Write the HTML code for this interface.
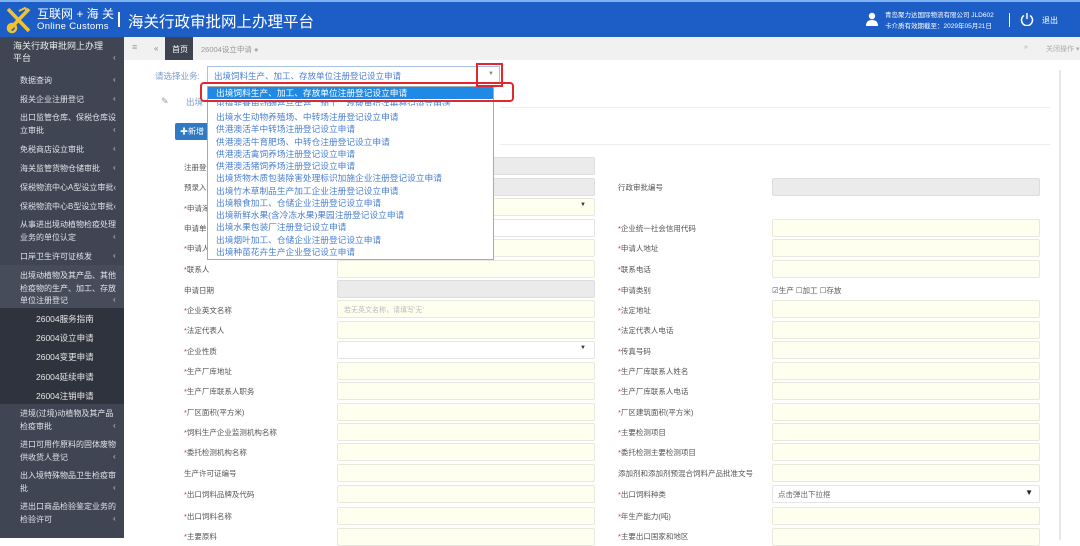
<!DOCTYPE html>
<html><head><meta charset="utf-8"><style>
*{margin:0;padding:0;box-sizing:border-box}
body{width:1080px;height:538px;overflow:hidden;background:#fff;font-family:"Liberation Sans","Noto Sans CJK SC",sans-serif;position:relative;color:#555}
.a{position:absolute;white-space:nowrap}
#hd{left:0;top:0;width:1080px;height:37px;background:#1d5ec6;border-top:2px solid #7fb0f0}
#sb{left:0;top:37px;width:124px;height:501px;background:#3f4552}
.si{position:absolute;left:20px;font-size:8px;color:#dfe3ea;line-height:12.5px;width:98px}
.ar{position:absolute;left:113px;font-size:8px;color:#ccc}
.sub{position:absolute;left:36px;font-size:8.5px;color:#e6e6e6}
.lb{position:absolute;font-size:7.5px;color:#555;white-space:nowrap}
.in{position:absolute;height:18px;background:#fffff0;border:1px solid #e8e8dc;border-radius:2px}
.gr{background:#ebebeb;border-color:#ddd}
.wh{background:#fff;border-color:#e4e4e4}
.st{color:#c33}
#dd{left:207px;top:86px;width:287px;height:174px;background:#fff;border:1px solid #aaa;z-index:10}
.dl{position:absolute;left:8px;font-size:8.7px;line-height:12px;color:#4a7fd0;white-space:nowrap}
</style></head><body>
<div id="hd" class="a">
 <svg class="a" style="left:5px;top:3px" width="28" height="30" viewBox="0 0 28 30"><path d="M3 4 L24 26 M24 4 L3 26" stroke="#f3c22c" stroke-width="3.5" fill="none"/><circle cx="7" cy="23" r="4" fill="none" stroke="#f3c22c" stroke-width="2.5"/><path d="M14 6 l6 -3 l3 4" stroke="#f3c22c" stroke-width="2" fill="none"/></svg>
 <div class="a" style="left:37px;top:3px;font-size:12px;color:#fff">互联网 + 海 关</div>
 <div class="a" style="left:37px;top:19px;font-size:9.5px;color:#fff;letter-spacing:.3px">Online Customs</div>
 <div class="a" style="left:118px;top:10px;width:2px;height:15px;background:#fff"></div>
 <div class="a" style="left:128px;top:8px;font-size:15.5px;color:#fff">海关行政审批网上办理平台</div>
 <svg class="a" style="left:866px;top:10px" width="12" height="14" viewBox="0 0 12 14"><circle cx="6" cy="4" r="3.2" fill="#fff"/><path d="M0 14 Q0 8 6 8 Q12 8 12 14Z" fill="#fff"/></svg>
 <div class="a" style="left:885px;top:8px;font-size:6.5px;color:#fff;line-height:11px">青岛聚力达国际物流有限公司 JLD602<br>卡介质有效期截至：2029年05月21日</div>
 <div class="a" style="left:1009px;top:11px;width:1px;height:14px;background:#fff"></div>
 <svg class="a" style="left:1020px;top:10px" width="14" height="14" viewBox="0 0 14 14"><path d="M4 3.5 A5.5 5.5 0 1 0 10 3.5" stroke="#fff" stroke-width="1.5" fill="none"/><path d="M7 1 V7" stroke="#fff" stroke-width="1.5"/></svg>
 <div class="a" style="left:1042px;top:13px;font-size:8px;color:#fff">退出</div>
</div>
<div id="sb" class="a">
 <div class="si" style="left:13px;top:3px;font-size:9px;line-height:12px;color:#eee">海关行政审批网上办理<br>平台</div><div class="ar" style="top:16px">‹</div>
 <div class="si" style="top:38px">数据查询</div><div class="ar" style="top:38px">‹</div>
 <div class="si" style="top:57px">报关企业注册登记</div><div class="ar" style="top:57px">‹</div>
 <div class="si" style="top:75px">出口监管仓库、保税仓库设<br>立审批</div><div class="ar" style="top:88px">‹</div>
 <div class="si" style="top:107px">免税商店设立审批</div><div class="ar" style="top:107px">‹</div>
 <div class="si" style="top:126px">海关监管货物仓储审批</div><div class="ar" style="top:126px">‹</div>
 <div class="si" style="top:145px">保税物流中心A型设立审批‹</div>
 <div class="si" style="top:164px">保税物流中心B型设立审批‹</div>
 <div class="si" style="top:182px">从事进出境动植物检疫处理<br>业务的单位认定</div><div class="ar" style="top:195px">‹</div>
 <div class="si" style="top:214px">口岸卫生许可证核发</div><div class="ar" style="top:214px">‹</div>
 <div class="a" style="left:0;top:228px;width:124px;height:43px;background:#464c5a"></div>
 <div class="si" style="top:233px">出境动植物及其产品、其他<br>检疫物的生产、加工、存放<br>单位注册登记</div><div class="ar" style="top:258px">‹</div>
 <div class="a" style="left:0;top:271px;width:124px;height:96px;background:#2f333e"></div>
 <div class="sub" style="top:276px">26004服务指南</div>
 <div class="sub" style="top:295px">26004设立申请</div>
 <div class="sub" style="top:314px">26004变更申请</div>
 <div class="sub" style="top:334px">26004延续申请</div>
 <div class="sub" style="top:353px">26004注销申请</div>
 <div class="si" style="top:371px">进境(过境)动植物及其产品<br>检疫审批</div><div class="ar" style="top:384px">‹</div>
 <div class="si" style="top:402px">进口可用作原料的固体废物<br>供收货人登记</div><div class="ar" style="top:415px">‹</div>
 <div class="si" style="top:433px">出入境特殊物品卫生检疫审<br>批</div><div class="ar" style="top:446px">‹</div>
 <div class="si" style="top:464px">进出口商品检验鉴定业务的<br>检验许可</div><div class="ar" style="top:477px">‹</div>
</div>
<div class="a" style="left:124px;top:37px;width:956px;height:23px;background:#f1f1f1"></div>
<div class="a" style="left:132px;top:42px;font-size:9px;color:#999">≡</div>
<div class="a" style="left:154px;top:44px;font-size:8px;color:#888">«</div>
<div class="a" style="left:165px;top:37px;width:28px;height:23px;background:#3d4350;color:#fff;font-size:8px;padding:7px 0 0 7px">首页</div>
<div class="a" style="left:201px;top:44px;font-size:7.5px;color:#999">26004设立申请 <span style="color:#aaa">●</span></div>
<div class="a" style="left:1024px;top:44px;font-size:7px;color:#aaa">»</div>
<div class="a" style="left:1046px;top:44px;font-size:7px;color:#aaa">关闭操作 ▾</div>
<div class="a" style="left:1059px;top:70px;width:2px;height:470px;background:#e6e6e6"></div>

<div class="lb" style="left:155px;top:70px;color:#7a9ccc;font-size:8.5px">请选择业务:</div>
<div class="a" style="left:207px;top:66px;width:293px;height:18px;border:1px solid #a9c1e6;background:#fff"></div>
<div class="a" style="left:214px;top:70px;font-size:8.5px;color:#4a7fd0">出境饲料生产、加工、存放单位注册登记设立申请</div>
<div class="a" style="left:488px;top:71px;font-size:6px;color:#888">▼</div>
<div class="a" style="left:476px;top:63px;width:27px;height:24px;border:2.5px solid #e0282e;z-index:11"></div>
<div class="a" style="left:161px;top:96px;font-size:9px;color:#999">✎</div>
<div class="a" style="left:186px;top:96px;font-size:8.5px;color:#7a9ccc">出境</div>
<div class="a" style="left:500px;top:107px;width:550px;height:1px;background:#eee"></div>
<div class="a" style="left:500px;top:144px;width:550px;height:1px;background:#eee"></div>
<div class="a" style="left:175px;top:123px;width:36px;height:17px;background:#2f7ac3;border-radius:2px;color:#fff;font-size:8px;padding:3px 0 0 5px">✚新增</div>

<div id="dd" class="a">
 <div class="a" style="left:0;top:0;width:285px;height:12px;background:#1e8ae6"></div>
 <div class="dl" style="top:0px;color:#fff">出境饲料生产、加工、存放单位注册登记设立申请</div>
 <div class="dl" style="top:12px;height:7px;overflow:hidden">出境非食用动物产品生产、加工、存放单位注册登记设立申请</div>
 <div class="dl" style="top:24px">出境水生动物养殖场、中转场注册登记设立申请</div>
 <div class="dl" style="top:36px">供港澳活羊中转场注册登记设立申请</div>
 <div class="dl" style="top:49px">供港澳活牛育肥场、中转仓注册登记设立申请</div>
 <div class="dl" style="top:61px">供港澳活禽饲养场注册登记设立申请</div>
 <div class="dl" style="top:73px">供港澳活猪饲养场注册登记设立申请</div>
 <div class="dl" style="top:85px">出境货物木质包装除害处理标识加施企业注册登记设立申请</div>
 <div class="dl" style="top:98px">出境竹木草制品生产加工企业注册登记设立申请</div>
 <div class="dl" style="top:110px">出境粮食加工、仓储企业注册登记设立申请</div>
 <div class="dl" style="top:122px">出境新鲜水果(含冷冻水果)果园注册登记设立申请</div>
 <div class="dl" style="top:134px">出境水果包装厂注册登记设立申请</div>
 <div class="dl" style="top:147px">出境烟叶加工、仓储企业注册登记设立申请</div>
 <div class="dl" style="top:159px">出境种苗花卉生产企业登记设立申请</div>
</div>
<div class="a" style="left:200px;top:82px;width:314px;height:20px;border:2.5px solid #e0282e;border-radius:4px;z-index:11"></div>

<!-- form left -->
<div class="lb" style="left:184px;top:162px">注册登记</div><div class="in gr" style="left:337px;top:157px;width:258px"></div>
<div class="lb" style="left:184px;top:182px">预录入编</div><div class="in gr" style="left:337px;top:178px;width:258px"></div>
<div class="lb" style="left:184px;top:203px"><span class="st">*</span>申请海关</div><div class="in" style="left:337px;top:198px;width:258px"><span style="position:absolute;right:8px;top:3px;font-size:6px;color:#333">▼</span></div>
<div class="lb" style="left:184px;top:223px">申请单位</div><div class="in wh" style="left:337px;top:219px;width:258px"></div>
<div class="lb" style="left:184px;top:243px"><span class="st">*</span>申请人名称</div><div class="in" style="left:337px;top:239px;width:258px"></div>
<div class="lb" style="left:184px;top:264px"><span class="st">*</span>联系人</div><div class="in" style="left:337px;top:260px;width:258px"></div>
<div class="lb" style="left:184px;top:285px">申请日期</div><div class="in gr" style="left:337px;top:280px;width:258px"></div>
<div class="lb" style="left:184px;top:305px"><span class="st">*</span>企业英文名称</div><div class="in" style="left:337px;top:300px;width:258px"><span style="position:absolute;left:6px;top:4px;font-size:7px;color:#bbb">若无英文名称，请填写'无'</span></div>
<div class="lb" style="left:184px;top:325px"><span class="st">*</span>法定代表人</div><div class="in" style="left:337px;top:321px;width:258px"></div>
<div class="lb" style="left:184px;top:346px"><span class="st">*</span>企业性质</div><div class="in wh" style="left:337px;top:341px;width:258px"><span style="position:absolute;right:8px;top:3px;font-size:6px;color:#333">▼</span></div>
<div class="lb" style="left:184px;top:366px"><span class="st">*</span>生产厂库地址</div><div class="in" style="left:337px;top:362px;width:258px"></div>
<div class="lb" style="left:184px;top:386px"><span class="st">*</span>生产厂库联系人职务</div><div class="in" style="left:337px;top:382px;width:258px"></div>
<div class="lb" style="left:184px;top:407px"><span class="st">*</span>厂区面积(平方米)</div><div class="in" style="left:337px;top:403px;width:258px"></div>
<div class="lb" style="left:184px;top:427px"><span class="st">*</span>饲料生产企业监测机构名称</div><div class="in" style="left:337px;top:423px;width:258px"></div>
<div class="lb" style="left:184px;top:447px"><span class="st">*</span>委托检测机构名称</div><div class="in" style="left:337px;top:443px;width:258px"></div>
<div class="lb" style="left:184px;top:468px">生产许可证编号</div><div class="in" style="left:337px;top:464px;width:258px"></div>
<div class="lb" style="left:184px;top:489px"><span class="st">*</span>出口饲料品牌及代码</div><div class="in" style="left:337px;top:485px;width:258px"></div>
<div class="lb" style="left:184px;top:511px"><span class="st">*</span>出口饲料名称</div><div class="in" style="left:337px;top:507px;width:258px"></div>
<div class="lb" style="left:184px;top:531px"><span class="st">*</span>主要原料</div><div class="in" style="left:337px;top:528px;width:258px"></div>
<!-- form right -->
<div class="lb" style="left:618px;top:182px">行政审批编号</div><div class="in gr" style="left:772px;top:178px;width:268px"></div>
<div class="lb" style="left:618px;top:223px"><span class="st">*</span>企业统一社会信用代码</div><div class="in" style="left:772px;top:219px;width:268px"></div>
<div class="lb" style="left:618px;top:243px"><span class="st">*</span>申请人地址</div><div class="in" style="left:772px;top:239px;width:268px"></div>
<div class="lb" style="left:618px;top:264px"><span class="st">*</span>联系电话</div><div class="in" style="left:772px;top:260px;width:268px"></div>
<div class="lb" style="left:618px;top:285px"><span class="st">*</span>申请类别</div><div class="lb" style="left:772px;top:285px">☑生产 ☐加工 ☐存放</div>
<div class="lb" style="left:618px;top:305px"><span class="st">*</span>法定地址</div><div class="in" style="left:772px;top:300px;width:268px"></div>
<div class="lb" style="left:618px;top:325px"><span class="st">*</span>法定代表人电话</div><div class="in" style="left:772px;top:321px;width:268px"></div>
<div class="lb" style="left:618px;top:346px"><span class="st">*</span>传真号码</div><div class="in" style="left:772px;top:341px;width:268px"></div>
<div class="lb" style="left:618px;top:366px"><span class="st">*</span>生产厂库联系人姓名</div><div class="in" style="left:772px;top:362px;width:268px"></div>
<div class="lb" style="left:618px;top:386px"><span class="st">*</span>生产厂库联系人电话</div><div class="in" style="left:772px;top:382px;width:268px"></div>
<div class="lb" style="left:618px;top:407px"><span class="st">*</span>厂区建筑面积(平方米)</div><div class="in" style="left:772px;top:403px;width:268px"></div>
<div class="lb" style="left:618px;top:427px"><span class="st">*</span>主要检测项目</div><div class="in" style="left:772px;top:423px;width:268px"></div>
<div class="lb" style="left:618px;top:447px"><span class="st">*</span>委托检测主要检测项目</div><div class="in" style="left:772px;top:443px;width:268px"></div>
<div class="lb" style="left:618px;top:468px">添加剂和添加剂预混合饲料产品批准文号</div><div class="in" style="left:772px;top:464px;width:268px"></div>
<div class="lb" style="left:618px;top:489px"><span class="st">*</span>出口饲料种类</div><div class="in wh" style="left:772px;top:485px;width:268px"><span style="position:absolute;left:5px;top:3px;font-size:7.5px;color:#666">点击弹出下拉框</span><span style="position:absolute;right:6px;top:2px;font-size:8px;color:#222">▼</span></div>
<div class="lb" style="left:618px;top:511px"><span class="st">*</span>年生产能力(吨)</div><div class="in" style="left:772px;top:507px;width:268px"></div>
<div class="lb" style="left:618px;top:531px"><span class="st">*</span>主要出口国家和地区</div><div class="in" style="left:772px;top:528px;width:268px"></div>
</body></html>
